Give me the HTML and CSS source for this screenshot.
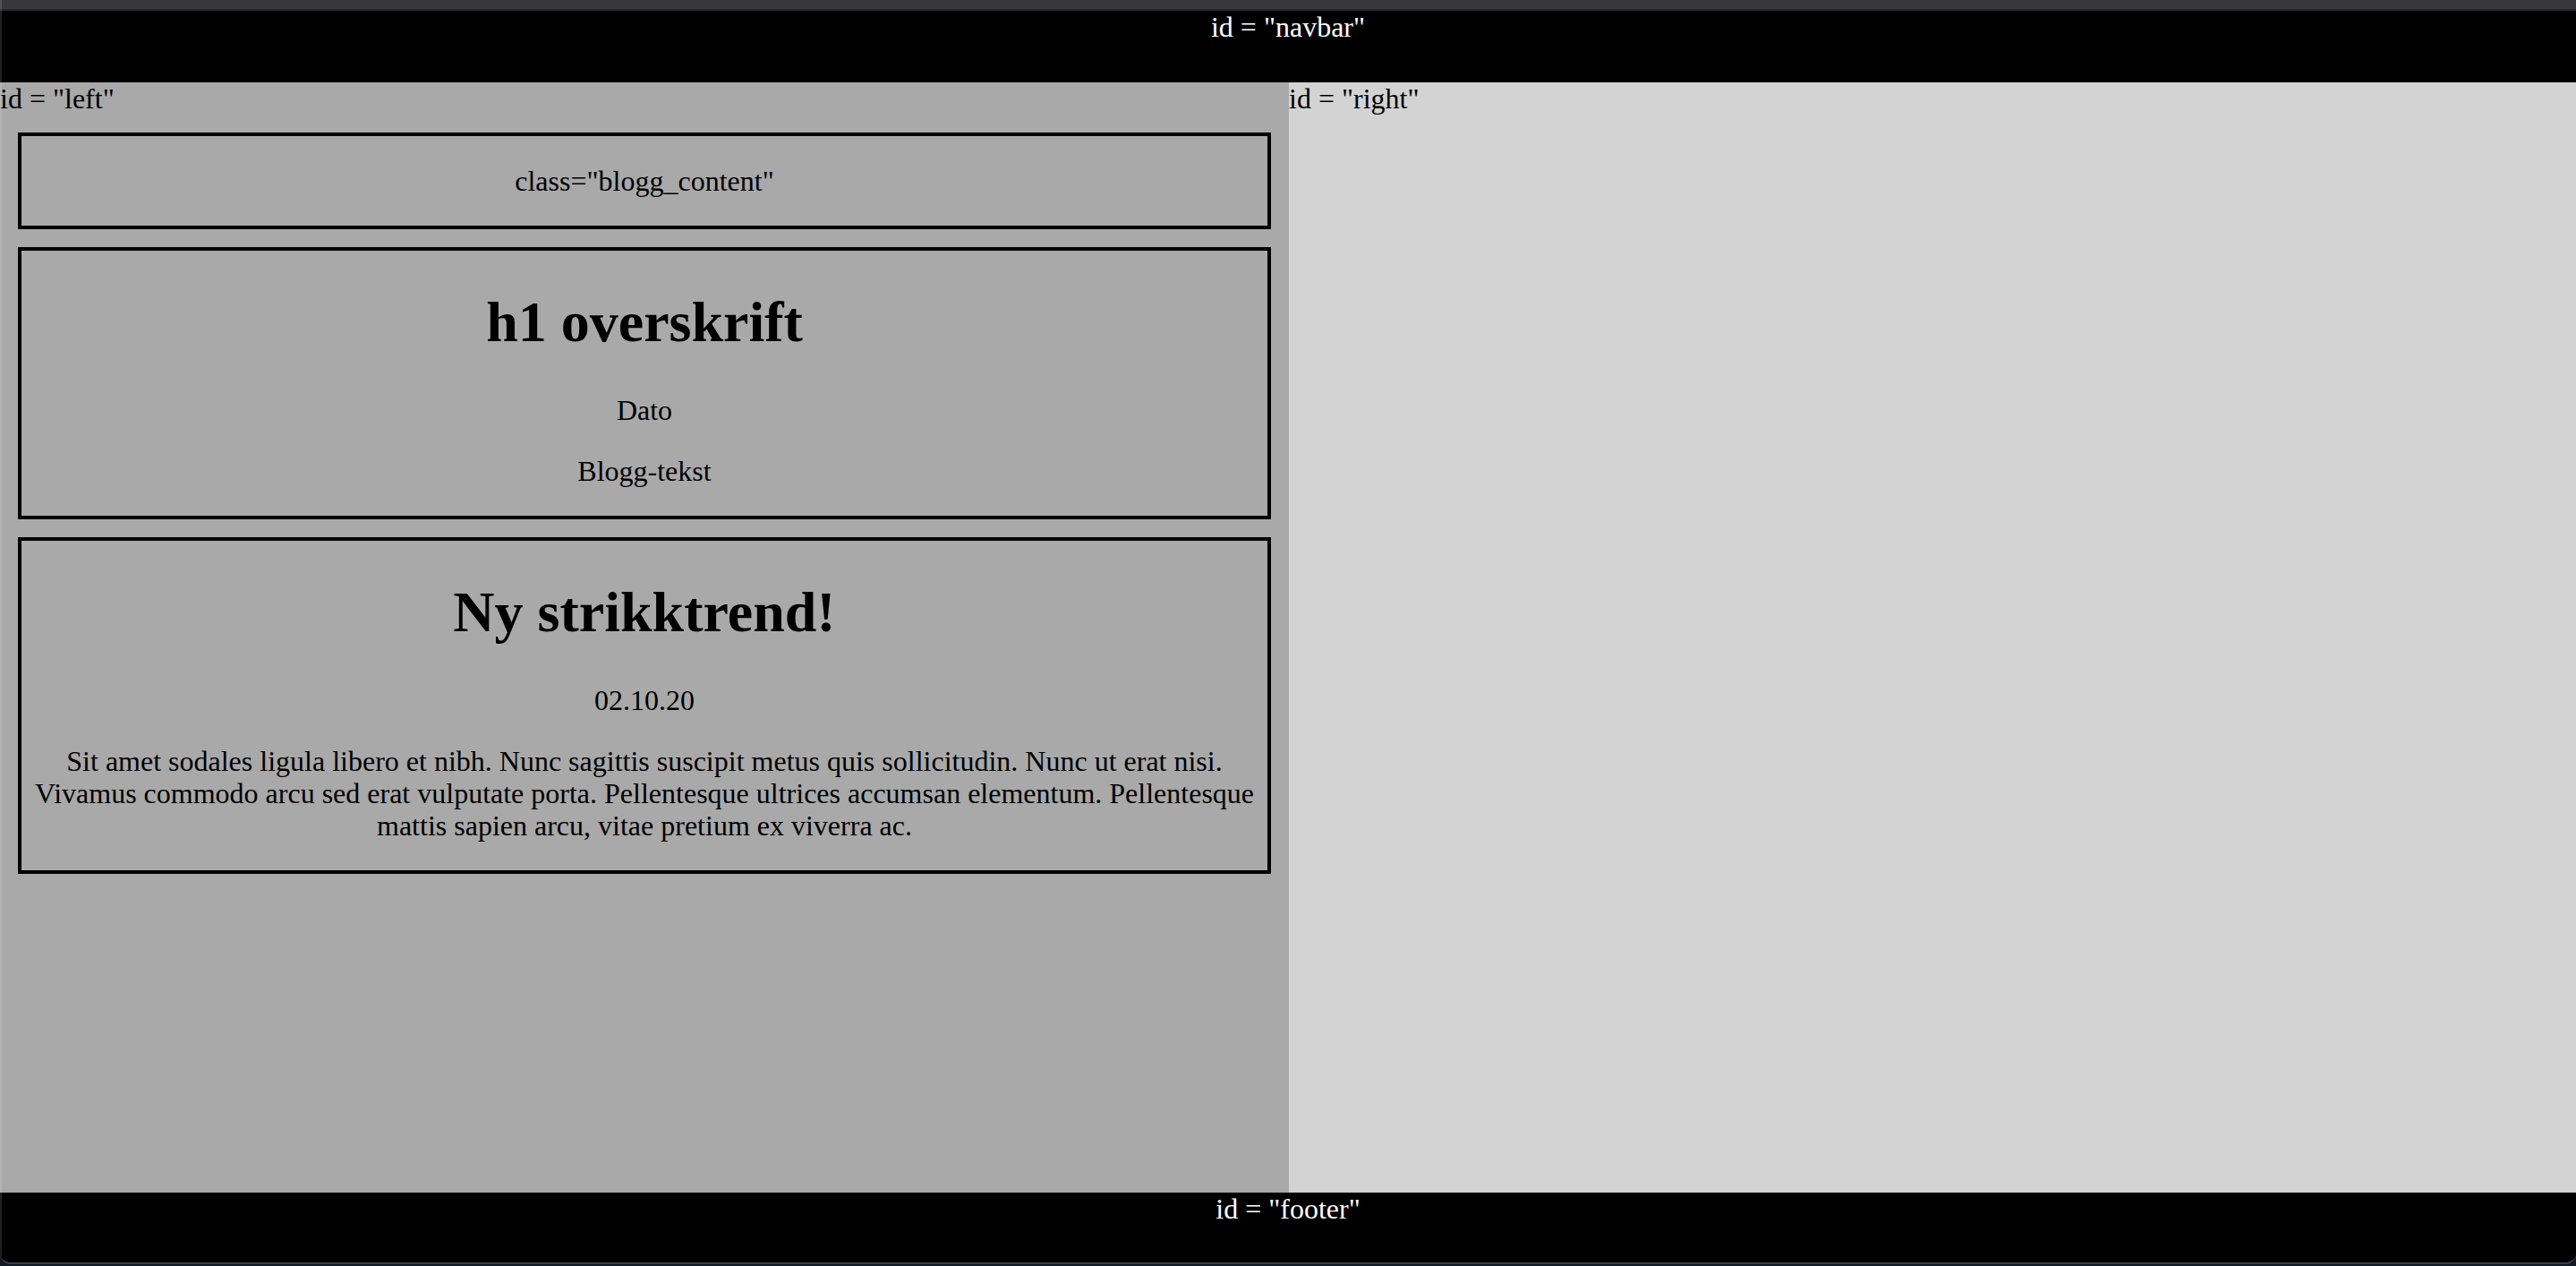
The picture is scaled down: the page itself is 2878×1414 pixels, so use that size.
FILE: index.html
```html
<!DOCTYPE html>
<html lang="no">
<head>
<meta charset="utf-8">
<title>Blogg</title>
<link rel="stylesheet" href="styles.css">
</head>
<body>
<div class="window">
  <div class="titlebar"></div>
  <div class="navbar">id = "navbar"</div>
  <div class="main">
    <div class="left">
      id = "left"
      <div class="blogg_content">
        <p>class="blogg_content"</p>
      </div>
      <div class="blogg_content">
        <h1>h1 overskrift</h1>
        <p>Dato</p>
        <p>Blogg-tekst</p>
      </div>
      <div class="blogg_content">
        <h1>Ny strikktrend!</h1>
        <p>02.10.20</p>
        <p>Sit amet sodales ligula libero et nibh. Nunc sagittis suscipit metus quis sollicitudin. Nunc ut erat nisi. Vivamus commodo arcu sed erat vulputate porta. Pellentesque ultrices accumsan elementum. Pellentesque mattis sapien arcu, vitae pretium ex viverra ac.</p>
      </div>
    </div>
    <div class="right">id = "right"</div>
  </div>
  <div class="footer">id = "footer"</div>
</div>
</body>
</html>
```

FILE: styles.css
```css
html, body {
  margin: 0;
  padding: 0;
}
body {
  background: #0e1a26;
  font-family: "Liberation Serif", "Times New Roman", serif;
  font-size: 32px;
  line-height: 36px;
  height: 1414px;
  overflow: hidden;
}
.window {
  position: relative;
  width: 2878px;
  border-bottom: 2px solid #3f4043;
  border-radius: 0 0 12px 12px;
  overflow: hidden;
}
.window::after {
  content: "";
  position: absolute;
  top: 0;
  left: 0;
  bottom: 0;
  width: 2px;
  background: rgba(255, 255, 255, 0.13);
  pointer-events: none;
}
.titlebar {
  height: 10px;
  background: #37383c;
  border-bottom: 2px solid #2a2b2e;
}
.navbar {
  height: 80px;
  background: #000;
  color: #fff;
  text-align: center;
}
.main {
  display: flex;
  height: 1240px;
}
.left {
  width: 1440px;
  background: #a9a9a9;
  color: #000;
  overflow: hidden;
}
.right {
  flex: 1;
  background: #d3d3d3;
  color: #000;
}
.blogg_content {
  margin: 20px;
  border: 4px solid #000;
  text-align: center;
}
.blogg_content h1 {
  font-size: 64px;
  line-height: 74px;
  margin: 43px 0;
}
.blogg_content p {
  margin: 32px 0;
}
.footer {
  height: 78px;
  background: #000;
  color: #fff;
  text-align: center;
}
```
